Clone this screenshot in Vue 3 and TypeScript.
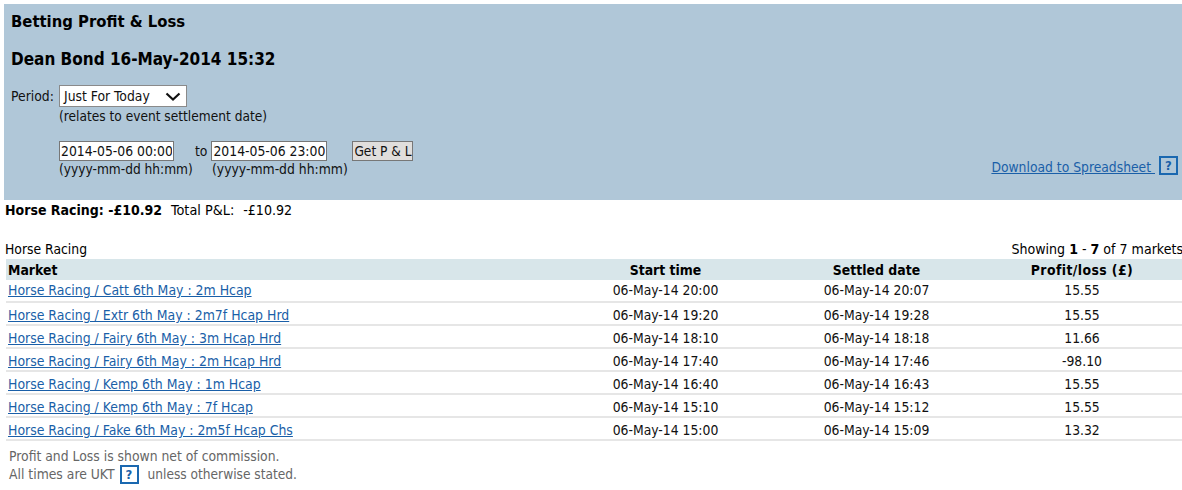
<script setup lang="ts">
interface Row { market: string; start: string; settled: string; pl: string }
const rows: Row[] = [
  { market: 'Horse Racing / Catt 6th May : 2m Hcap', start: '06-May-14 20:00', settled: '06-May-14 20:07', pl: '15.55' },
  { market: 'Horse Racing / Extr 6th May : 2m7f Hcap Hrd', start: '06-May-14 19:20', settled: '06-May-14 19:28', pl: '15.55' },
  { market: 'Horse Racing / Fairy 6th May : 3m Hcap Hrd', start: '06-May-14 18:10', settled: '06-May-14 18:18', pl: '11.66' },
  { market: 'Horse Racing / Fairy 6th May : 2m Hcap Hrd', start: '06-May-14 17:40', settled: '06-May-14 17:46', pl: '-98.10' },
  { market: 'Horse Racing / Kemp 6th May : 1m Hcap', start: '06-May-14 16:40', settled: '06-May-14 16:43', pl: '15.55' },
  { market: 'Horse Racing / Kemp 6th May : 7f Hcap', start: '06-May-14 15:10', settled: '06-May-14 15:12', pl: '15.55' },
  { market: 'Horse Racing / Fake 6th May : 2m5f Hcap Chs', start: '06-May-14 15:00', settled: '06-May-14 15:09', pl: '13.32' },
]
</script>

<template>
  <div class="page">
    <section class="panel">
      <h1 class="title">Betting Profit &amp; Loss</h1>
      <h2 class="user">Dean Bond 16-May-2014 15:32</h2>
      <div class="period-row">
        <span class="period-label">Period:</span>
        <span class="select">Just For Today
          <svg class="chev" width="16" height="9" viewBox="0 0 16 9"><path d="M1.5 1.5 8 7.5l6.5-6" fill="none" stroke="#111" stroke-width="2.2"/></svg>
        </span>
      </div>
      <div class="hint">(relates to event settlement date)</div>
      <div class="bottom">
        <div class="dates">
          <div class="date-row">
            <input class="date" value="2014-05-06 00:00" />
            <span class="to">to</span>
            <input class="date date2" value="2014-05-06 23:00" />
            <button class="go">Get P &amp; L</button>
          </div>
          <div class="fmt"><span>(yyyy-mm-dd hh:mm)</span><span class="fmt2">(yyyy-mm-dd hh:mm)</span></div>
        </div>
        <div class="download"><a class="dl" href="#">Download to Spreadsheet&nbsp;</a><span class="help">?</span></div>
      </div>
    </section>
    <div class="summary"><b>Horse Racing: -£10.92</b><span class="total">Total P&amp;L:</span><span class="total2">-£10.92</span></div>
    <div class="caption"><span>Horse Racing</span><span class="showing">Showing <b>1</b> - <b>7</b> of 7 markets</span></div>
    <table class="grid">
      <thead>
        <tr><th class="left">Market</th><th>Start time</th><th>Settled date</th><th class="pl">Profit/loss (£)</th></tr>
      </thead>
      <tbody>
        <tr v-for="r in rows" :key="r.market + r.start">
          <td class="left"><a href="#">{{ r.market }}</a></td>
          <td>{{ r.start }}</td>
          <td>{{ r.settled }}</td>
          <td>{{ r.pl }}</td>
        </tr>
      </tbody>
    </table>
    <div class="notes">
      <div>Profit and Loss is shown net of commission.</div>
      <div class="note2"><span class="ukt">All times are UKT</span><span class="help">?</span><span class="unless">unless otherwise stated.</span></div>
    </div>
  </div>
</template>

<style scoped>
.page {
  width: 1182px;
  height: 490px;
  overflow: hidden;
  font-family: "DejaVu Sans", sans-serif;
  font-stretch: condensed;
  font-size: 13.8px;
  color: #111;
  padding-top: 4px;
  box-sizing: border-box;
}
.panel {
  margin-left: 4px;
  height: 196px;
  background: #b0c7d8;
  padding: 8px 0 0 7px;
  box-sizing: border-box;
}
.title, .user {
  margin: 0;
  font-size: 16.5px;
  font-weight: bold;
  color: #000;
  line-height: 20px;
}
.user { margin-top: 17px; font-size: 17px; }
.period-row { display: flex; align-items: center; margin-top: 16px; height: 22px; }
.period-label { width: 48px; }
.select {
  width: 128px;
  height: 22px;
  box-sizing: border-box;
  border: 1px solid #8a8a8a;
  background: #fff;
  padding: 0 4px;
  display: flex;
  align-items: center;
  justify-content: space-between;
  white-space: nowrap;
}
.chev { margin-right: 1px; }
.hint { margin-left: 48px; line-height: 18px; font-size: 13.6px; }
.bottom { display: flex; justify-content: space-between; align-items: flex-end; margin-top: 16px; }
.dates { margin-left: 48px; }
.date-row { display: flex; align-items: center; height: 20px; }
.date {
  width: 115px;
  height: 20px;
  box-sizing: border-box;
  border: 1px solid #777;
  background: #fff;
  padding: 0 1px;
  font: inherit;
  color: #111;
  border-radius: 0;
}
.date2 { width: 116px; }
.to { margin: 0 4px 0 21px; }
.go {
  margin-left: 25px;
  width: 61px;
  height: 20px;
  box-sizing: border-box;
  border: 1px solid #777;
  background: #e0dedc;
  font: inherit;
  font-size: 13.6px;
  color: #111;
  padding: 0;
  border-radius: 0;
  white-space: nowrap;
}
.fmt { display: flex; line-height: 18px; margin-top: -1px; font-size: 13.6px; }
.fmt span:first-child { width: 153px; }
.fmt2 { font-size: 13.8px; }
.download { margin-right: 4px; display: flex; align-items: center; margin-bottom: 3px; font-size: 13.75px; }
.dl { margin-top: 3px; }
a { color: #1a5fa8; text-decoration: underline; }
.help {
  display: inline-block;
  flex: none;
  width: 19px;
  height: 19px;
  box-sizing: border-box;
  border: 2px solid #1a68b0;
  color: #1a5fa8;
  font-weight: bold;
  font-size: 13px;
  line-height: 15px;
  text-align: center;
  margin-left: 4px;
}
.notes .help { background: #fff; margin: 0 0 0 5px; }
.summary { margin-left: 5px; margin-top: 1px; line-height: 18px; color: #000; font-size: 14px; }
.total { margin-left: 9px; font-size: 14.3px; }
.total2 { margin-left: 9px; font-size: 14.1px; }
.caption { display: flex; justify-content: space-between; margin: 21px 0 0 5px; line-height: 18px; color: #000; white-space: nowrap; }
.showing { margin-right: -1px; font-size: 14.05px; }
.grid { border-collapse: collapse; margin-left: 6px; margin-top: 1px; width: 1176px; table-layout: fixed; }
.grid th { background: #d8e6ea; height: 21px; padding: 0; font-size: 13.9px; font-weight: bold; color: #000; }
.grid th.pl { letter-spacing: 0.4px; }
.grid td { height: 21px; padding: 0; text-align: center; border-bottom: 2px solid #e6e6e6; box-sizing: border-box; line-height: 21px; }
.grid tr + tr td { padding-top: 3px; line-height: 18px; }
.grid th:nth-child(1) { width: 552px; }
.grid th:nth-child(2) { width: 211px; }
.grid th:nth-child(3) { width: 211px; }
.grid .left { text-align: left; padding-left: 2px; font-size: 13.9px; }
.notes { margin-left: 9px; margin-top: 6px; color: #666; line-height: 18px; }
.note2 { display: flex; align-items: center; white-space: pre; height: 18px; font-size: 13.8px; }
.unless { margin-left: 9px; font-size: 13.6px; }
</style>
